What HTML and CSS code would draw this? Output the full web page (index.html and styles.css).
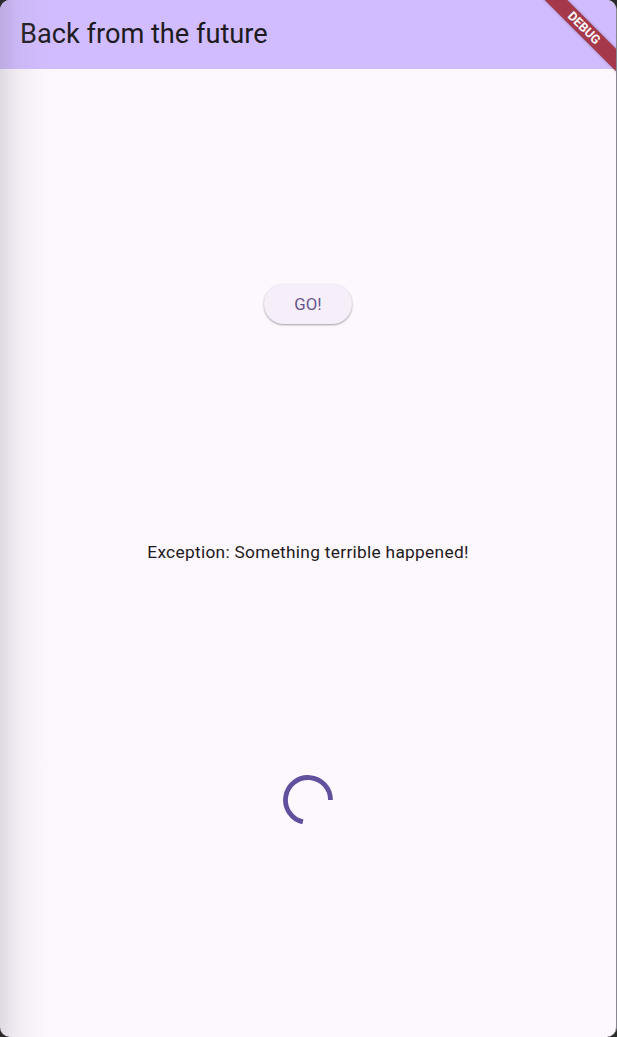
FILE: index.html
```html
<!DOCTYPE html>
<html>
<head>
<meta charset="utf-8">
<link rel="stylesheet" href="styles.css">
</head>
<body>
<div class="screen">
  <header class="appbar">
    <h1 class="title">Back from the future</h1>
  </header>
  <main class="content">
    <div class="btn-wrap"><button class="go">GO!</button></div>
    <p class="message">Exception: Something terrible happened!</p>
    <div class="spinner-wrap">
      <svg class="spinner" width="50" height="50" viewBox="0 0 50 50">
        <path d="M47.5 25 A22.5 22.5 0 1 0 19.9 46.9" fill="none" stroke="#62509f" stroke-width="4.8"/>
      </svg>
    </div>
  </main>
  <div class="edge-shadow"></div>
  <div class="debug"><span>DEBUG</span></div>
</div>
</body>
</html>
```
FILE: styles.css
```css
html, body {
  margin: 0;
  padding: 0;
  width: 617px;
  height: 1037px;
  background: #2b2b2b;
  overflow: hidden;
}
.screen {
  position: relative;
  width: 616px;
  height: 1037px;
  border-right: 1px solid #8a8690;
  box-sizing: content-box;
  border-radius: 10px;
  overflow: hidden;
  background: #fdf7fe;
  display: flex;
  flex-direction: column;
  font-family: Roboto, "Noto Sans", sans-serif;
}
.appbar {
  height: 69px;
  flex: none;
  background: #d0bcff;
  display: flex;
  align-items: center;
  padding-left: 20px;
}
.title {
  margin: 0;
  font-weight: 400;
  font-size: 27.2px;
  color: #1d1b20;
  line-height: 1;
  padding-top: 1px;
}
.content {
  flex: 1;
  display: flex;
  flex-direction: column;
  align-items: center;
  justify-content: space-evenly;
}
.btn-wrap {
  height: 48px;
  display: flex;
  align-items: center;
  margin-top: -1px;
}
.go {
  width: 88px;
  height: 40px;
  border: none;
  border-radius: 20px;
  background: #f6eff9;
  color: #65558f;
  font-family: Roboto, sans-serif;
  font-size: 16.8px;
  font-weight: 400;
  box-shadow: 0 1px 2px rgba(0,0,0,0.28), 0 1px 3px rgba(0,0,0,0.1);
  padding: 0;
}
.message {
  margin: 0;
  height: 24px;
  line-height: 24px;
  font-size: 17.3px;
  color: #1d1b20;
  letter-spacing: 0.3px;
}
.spinner-wrap {
  height: 50px;
  width: 50px;
}
.spinner {
  display: block;
}
.edge-shadow {
  position: absolute;
  left: 0;
  top: 0;
  bottom: 0;
  width: 60px;
  background: linear-gradient(to right, rgba(120,110,125,0.22), rgba(150,140,155,0.10) 30%, rgba(200,190,205,0.03) 70%, rgba(255,255,255,0));
  pointer-events: none;
}
.debug {
  position: absolute;
  top: 0;
  right: 0;
  width: 80px;
  height: 80px;
  overflow: hidden;
  pointer-events: none;
}
.debug span {
  position: absolute;
  top: 20px;
  left: -7px;
  width: 110px;
  height: 16px;
  line-height: 16px;
  background: #a5394b;
  color: #fff;
  font-family: Roboto, sans-serif;
  font-weight: 700;
  font-size: 12.5px;
  text-align: center;
  transform: rotate(45deg);
  box-shadow: 0 0 3px rgba(0,0,0,0.3);
}
```
